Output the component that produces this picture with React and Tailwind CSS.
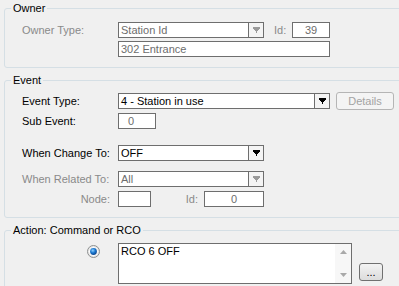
import React from "react";

// small combo arrow, black when enabled and grey when disabled
function Arrow({ disabled }) {
  const fill = disabled ? "#9a9a9a" : "#000000";
  return (
    <svg width="7" height="6" viewBox="0 0 7 6" aria-hidden>
      <rect x="0" y="0" width="7" height="2" fill={fill} />
      <rect x="1" y="2" width="5" height="1" fill={fill} />
      <rect x="2" y="3" width="3" height="1" fill={fill} />
      <rect x="3" y="4" width="1" height="2" fill={fill} />
    </svg>
  );
}

function Combo({ value, className, disabled }) {
  return (
    <div className={`flex h-[16px] border border-[#6e6e6e] bg-white ${className}`}>
      <div className={`flex-1 pl-[2px] leading-[14px] ${disabled ? "text-[#6d6d6d]" : "text-black"}`}>{value}</div>
      <div className="flex w-[15px] items-center justify-center border-l border-[#6e6e6e] bg-[#f4f4f4]">
        <Arrow disabled={disabled} />
      </div>
    </div>
  );
}

function Box({ value, className }) {
  return (
    <div className={`h-[16px] border border-[#6e6e6e] bg-white leading-[14px] text-[#6d6d6d] ${className}`}>
      {value}
    </div>
  );
}

function Legend({ children }) {
  return <legend className="ml-[6px] px-[2px] text-[11px] leading-[13px] text-black">{children}</legend>;
}

function Radio() {
  return (
    <svg width="13" height="13" viewBox="0 0 13 13" aria-hidden>
      <defs>
        <radialGradient id="dot" cx="0.4" cy="0.35" r="0.7">
          <stop offset="0" stopColor="#8fd0ff" />
          <stop offset="0.5" stopColor="#1a78d0" />
          <stop offset="1" stopColor="#0b3f86" />
        </radialGradient>
      </defs>
      <circle cx="6.5" cy="6.5" r="6" fill="#e9e9e9" stroke="#8e9090" />
      <circle cx="6.5" cy="6.5" r="4.3" fill="#ffffff" />
      <circle cx="6.5" cy="6.5" r="3.4" fill="url(#dot)" />
    </svg>
  );
}

export default function App() {
  return (
    <div className="h-[286px] w-[399px] overflow-hidden bg-[#f0f0f0] font-['Liberation_Sans',Arial,sans-serif] text-[11px]">
      {/* Owner */}
      <fieldset className="ml-[4px] mt-[2px] w-[420px] rounded-[3px] border border-[#d5dfe5] px-0 pb-[10px] pt-[7px]">
        <Legend>Owner</Legend>
        <div className="flex h-[16px] items-center pl-[17px]">
          <div className="w-[96px] text-[#8a8a8a]">Owner Type:</div>
          <Combo value="Station Id" className="w-[146px]" disabled />
          <div className="ml-[10px] w-[18px] text-[#8a8a8a]">Id:</div>
          <Box value="39" className="w-[38px] text-center" />
        </div>
        <div className="mt-[3px] flex pl-[113px]">
          <Box value="302 Entrance" className="w-[212px] pl-[2px]" />
        </div>
      </fieldset>

      {/* Event */}
      <fieldset className="ml-[4px] mt-[6px] w-[420px] rounded-[3px] border border-[#d5dfe5] px-0 pb-[10px] pt-[5px]">
        <Legend>Event</Legend>
        <div className="flex h-[18px] items-center pl-[17px]">
          <div className="w-[96px] text-black">Event Type:</div>
          <Combo value="4 - Station in use" className="w-[212px]" />
          <button className="ml-[6px] h-[18px] w-[58px] rounded-[3px] border border-[#b5b5b5] bg-[#f4f4f4] text-[11px] text-[#a3a3a3]">
            Details
          </button>
        </div>
        <div className="mt-[3px] flex h-[16px] items-center pl-[17px]">
          <div className="w-[96px] text-black">Sub Event:</div>
          <Box value="0" className="w-[38px] pl-[9px]" />
        </div>
        <div className="mt-[16px] flex h-[16px] items-center pl-[17px]">
          <div className="w-[96px] text-black">When Change To:</div>
          <Combo value="OFF" className="w-[146px]" />
        </div>
        <div className="mt-[10px] flex h-[16px] items-center pl-[17px]">
          <div className="w-[96px] text-[#8a8a8a]">When Related To:</div>
          <Combo value="All" className="w-[146px]" disabled />
        </div>
        <div className="mt-[4px] flex h-[16px] items-center pl-[17px]">
          <div className="w-[96px] pr-[8px] text-right text-[#8a8a8a]">Node:</div>
          <Box value="" className="w-[33px]" />
          <div className="w-[53px] pr-[6px] text-right text-[#8a8a8a]">Id:</div>
          <Box value="0" className="w-[60px] text-center" />
        </div>
      </fieldset>

      {/* Action */}
      <fieldset className="ml-[4px] mt-[6px] w-[420px] rounded-[3px] border border-[#d5dfe5] px-0 pb-[10px] pt-[6px]">
        <Legend>Action: Command or RCO</Legend>
        <div className="flex items-start pl-[17px]">
          <div className="w-[96px] pl-[65px] pt-[2px]">
            <Radio />
          </div>
          <div className="flex h-[41px] w-[234px] border border-[#6e6e6e] bg-white">
            <div className="flex-1 pl-[2px] pt-[1px] leading-[13px] text-black">RCO 6 OFF</div>
            <div className="flex w-[16px] flex-col items-center justify-between bg-[#f7f7f7] py-[6px]">
              <svg width="7" height="4" viewBox="0 0 7 4" aria-hidden>
                <polygon points="3.5,0 7,4 0,4" fill="#a9a9a9" />
              </svg>
              <svg width="7" height="4" viewBox="0 0 7 4" aria-hidden>
                <polygon points="0,0 7,0 3.5,4" fill="#a9a9a9" />
              </svg>
            </div>
          </div>
          <button className="mb-[3px] ml-[7px] h-[18px] w-[24px] self-end rounded-[3px] border border-[#707070] bg-gradient-to-b from-[#f3f3f3] to-[#dcdcdc] text-[11px] leading-[12px] text-black">
            ...
          </button>
        </div>
      </fieldset>
    </div>
  );
}
